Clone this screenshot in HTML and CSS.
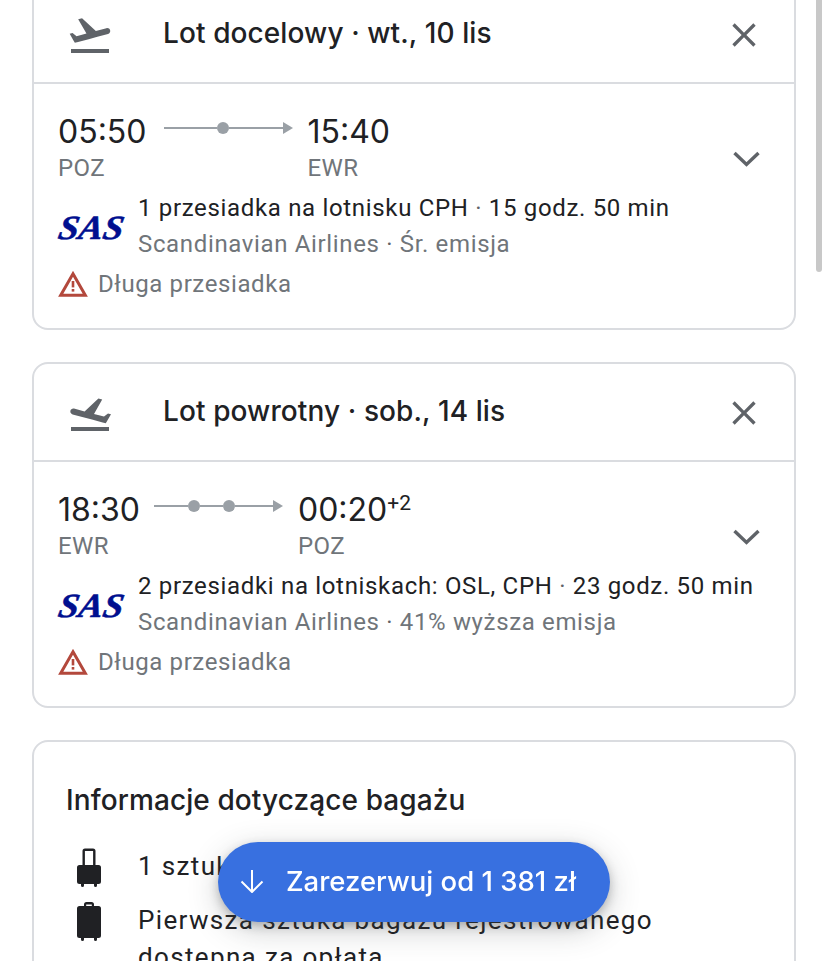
FILE: index.html
```html
<!DOCTYPE html>
<html lang="pl">
<head>
<meta charset="utf-8">
<title>Lot</title>
<link rel="stylesheet" href="styles.css">
</head>
<body>
<main class="page">
  <section class="card">
    <header class="card-head">
      <svg class="head-icon" viewBox="0 0 24 24"><path d="M2.5 19h19v2h-19zm19.57-9.36c-.21-.8-1.04-1.28-1.84-1.06L14.92 10l-6.9-6.43-1.93.51 4.14 7.17-4.97 1.33-1.97-1.54-1.45.39 1.82 3.16.77 1.33 1.6-.43 5.31-1.42 4.35-1.16L21 11.49c.81-.23 1.28-1.05 1.07-1.85z"/></svg>
      <h2 class="head-title">Lot docelowy · wt., 10 lis</h2>
      <svg class="close-icon" viewBox="0 0 24 24"><path d="M19 6.41 17.59 5 12 10.59 6.41 5 5 6.41 10.59 12 5 17.59 6.41 19 12 13.41 17.59 19 19 17.59 13.41 12z"/></svg>
    </header>
    <div class="card-body">
      <div class="times">
        <div class="time-col">
          <div class="time">05:50</div>
          <div class="code">POZ</div>
        </div>
        <div class="route">
          <span class="line lead-one"></span><span class="dot"></span><span class="line tail"></span><span class="arrow"></span>
        </div>
        <div class="time-col">
          <div class="time">15:40</div>
          <div class="code">EWR</div>
        </div>
      </div>
      <svg class="chev" viewBox="0 0 30 20"><path d="M2.500 4 14.500 15.500 26.500 4" fill="none" stroke-width="3.400"/></svg>
      <div class="info">
        <div class="logo">SAS</div>
        <div class="info-text">
          <div class="stops">1 przesiadka na lotnisku CPH <span class="sep">·</span> 15 godz. 50 min</div>
          <div class="sub">Scandinavian Airlines <span class="sep">·</span> Śr. emisja</div>
        </div>
      </div>
      <div class="warn">
        <svg class="warn-icon" viewBox="0 0 30 26"><path d="M15 2.800 27.300 24.200H2.700Z" fill="none" stroke="#b3483c" stroke-width="3"/><rect x="13.700" y="10" width="2.600" height="6.400" fill="#b3483c"/><rect x="13.700" y="18" width="2.600" height="2.600" fill="#b3483c"/></svg>
        <span>Długa przesiadka</span>
      </div>
    </div>
  </section>

  <section class="card">
    <header class="card-head">
      <svg class="head-icon" viewBox="0 0 24 24"><path d="M2.500 19h19v2h-19zM2.200 10.900c-.2.8.3 1.600 1.100 1.800l5.300 1.400 4.400 1.200 5.300 1.400 1.600.4.8-1.300 1.800-3.200-1.500-.4-2 1.600-5-1.300 4.100-7.200-1.900-.5-6.900 6.400-5.300-1.400c-.8-.2-1.600.3-1.800 1.100z"/></svg>
      <h2 class="head-title">Lot powrotny · sob., 14 lis</h2>
      <svg class="close-icon" viewBox="0 0 24 24"><path d="M19 6.41 17.59 5 12 10.59 6.41 5 5 6.41 10.59 12 5 17.59 6.41 19 12 13.41 17.59 19 19 17.59 13.41 12z"/></svg>
    </header>
    <div class="card-body">
      <div class="times">
        <div class="time-col">
          <div class="time">18:30</div>
          <div class="code">EWR</div>
        </div>
        <div class="route route-two">
          <span class="line lead-two"></span><span class="dot"></span><span class="line short"></span><span class="dot"></span><span class="line tail"></span><span class="arrow"></span>
        </div>
        <div class="time-col">
          <div class="time">00:20<sup class="plus">+2</sup></div>
          <div class="code">POZ</div>
        </div>
      </div>
      <svg class="chev" viewBox="0 0 30 20"><path d="M2.500 4 14.500 15.500 26.500 4" fill="none" stroke-width="3.400"/></svg>
      <div class="info">
        <div class="logo">SAS</div>
        <div class="info-text">
          <div class="stops">2 przesiadki na lotniskach: OSL, CPH <span class="sep">·</span> 23 godz. 50 min</div>
          <div class="sub">Scandinavian Airlines <span class="sep">·</span> 41% wyższa emisja</div>
        </div>
      </div>
      <div class="warn">
        <svg class="warn-icon" viewBox="0 0 30 26"><path d="M15 2.800 27.300 24.200H2.700Z" fill="none" stroke="#b3483c" stroke-width="3"/><rect x="13.700" y="10" width="2.600" height="6.400" fill="#b3483c"/><rect x="13.700" y="18" width="2.600" height="2.600" fill="#b3483c"/></svg>
        <span>Długa przesiadka</span>
      </div>
    </div>
  </section>

  <section class="card bag-card">
    <h2 class="bag-title">Informacje dotyczące bagażu</h2>
    <div class="bag-row">
      <svg class="bag-icon" viewBox="0 0 24 39"><path d="M5.500 17V3A2.500 2.500 0 0 1 8 .5h8A2.500 2.500 0 0 1 18.500 3v14h-2.400V3H7.900v14z"/><path d="M2.500 17h19A2.500 2.500 0 0 1 24 19.500v14a2.500 2.500 0 0 1-2.500 2.500H20v1.500a1.500 1.500 0 0 1-3 0V36H7v1.500a1.500 1.500 0 0 1-3 0V36H2.500A2.500 2.500 0 0 1 0 33.500v-14A2.500 2.500 0 0 1 2.500 17z"/></svg>
      <div class="bag-text">1 sztuka bagażu podręcznego</div>
    </div>
    <div class="bag-row">
      <svg class="bag-icon" viewBox="0 0 24 39"><path d="M7 5V2.500A2.500 2.500 0 0 1 9.500 0h5A2.500 2.500 0 0 1 17 2.500V5h-2.200V2.500H9.200V5z"/><path d="M2.500 4h19A2.500 2.500 0 0 1 24 6.500v27a2.500 2.500 0 0 1-2.500 2.500H20v1.500a1.500 1.500 0 0 1-3 0V36H7v1.500a1.500 1.500 0 0 1-3 0V36H2.500A2.500 2.500 0 0 1 0 33.500v-27A2.500 2.500 0 0 1 2.500 4z"/></svg>
      <div class="bag-text">Pierwsza sztuka bagażu rejestrowanego dostępna za opłatą</div>
    </div>
  </section>
</main>

<button class="fab" type="button">
  <svg class="fab-icon" viewBox="0 0 24 24"><path d="M12 1V23M1.500 12.500 12 23l10.500-10.500" fill="none" stroke="#fff" stroke-width="2"/></svg>
  <span>Zarezerwuj od 1 381 zł</span>
</button>
<div class="scroll-thumb"></div>
</body>
</html>
```
FILE: styles.css
```css
* { box-sizing: border-box; }
html, body { margin: 0; height: 961px; overflow: hidden; background: #fff; }
body { font-family: Roboto, "Liberation Sans", sans-serif; color: #202124; }

.page {
  width: 764px;
  margin: -16px 0 0 32px;
  display: flex;
  flex-direction: column;
  gap: 32px;
}
.card {
  border: 2px solid #dadce0;
  border-radius: 16px;
  background: #fff;
}
.card-head {
  height: 98px;
  border-bottom: 2px solid #dadce0;
  display: flex;
  align-items: center;
  padding: 2px 30px 0 32px;
}
.head-icon { width: 48px; height: 48px; fill: #5f6368; flex: none; }
.head-title {
  margin: 0 0 4px 49px;
  font: 500 28px/36px Inter, Roboto, sans-serif;
  letter-spacing: .1px;
  flex: 1;
}
.close-icon { width: 40px; height: 40px; fill: #5f6368; flex: none; }

.card-body { position: relative; padding: 26px 24px 26px 24px; }
.times { display: flex; align-items: flex-start; }
.time { padding-top: 1px; font: 400 32px/41px Inter, Roboto, sans-serif; white-space: nowrap; }
.plus { font: 400 21px/0 Roboto, sans-serif; vertical-align: 11px; }
.code { font: 400 24px/32px Roboto, sans-serif; color: #70757a; letter-spacing: .4px; }
.route { display: flex; align-items: center; width: 129px; height: 40px; margin: 0 15px 0 17px; padding-bottom: 4px; flex: none; }
.route-two { margin-left: 14px; }
.line { height: 2px; background: #9aa0a6; }
.lead-one { flex: 1; }
.lead-two { flex: none; width: 34px; }
.line.tail { flex: 1; }
.line.short { flex: none; width: 23px; }
.dot { width: 12px; height: 12px; border-radius: 50%; background: #9aa0a6; flex: none; }
.arrow {
  width: 0; height: 0; flex: none;
  border-left: 10px solid #9aa0a6;
  border-top: 6px solid transparent;
  border-bottom: 6px solid transparent;
}
.chev { position: absolute; top: 65px; right: 32px; width: 30px; height: 20px; stroke: #5f6368; }

.info { display: flex; align-items: center; margin-top: 6px; }
.logo {
  width: 80px;
  flex: none;
  font: italic 700 34px/36px "Liberation Serif", serif;
  color: #000f8f;
  -webkit-text-stroke: .5px #000f8f;
  transform-origin: left center;
  transform: translate(1px, 2px) scaleX(1.07) skewX(-10deg);
}
.stops { font-size: 24px; line-height: 36px; letter-spacing: .67px; white-space: nowrap; }
.sub { font-size: 24px; line-height: 36px; letter-spacing: .65px; color: #70757a; white-space: nowrap; }
.sep { color: #5f6368; }
.warn { display: flex; align-items: center; gap: 10px; margin-top: 4px; font-size: 24px; line-height: 36px; letter-spacing: .6px; color: #70757a; }
.warn-icon { width: 30px; height: 26px; flex: none; }

.bag-card { padding: 36px 32px 0 32px; height: 400px; }
.bag-title { margin: 0 0 26px; font: 500 28px/44px Inter, Roboto, sans-serif; letter-spacing: .1px; }
.bag-row { display: flex; align-items: flex-start; margin-bottom: 15px; }
.bag-icon { width: 24px; height: 39px; margin: 0 37px 0 11px; fill: #202124; flex: none; }
.bag-text { font-size: 26px; line-height: 37px; letter-spacing: 1.35px; width: 540px; }

.fab {
  position: fixed;
  left: 218px;
  top: 842px;
  width: 392px;
  height: 80px;
  border: 0;
  border-radius: 40px;
  background: #3870e0;
  color: #fff;
  display: flex;
  align-items: center;
  gap: 22px;
  padding: 0 0 2px 22px;
  font: 500 27.5px/36px Inter, Roboto, sans-serif;
  box-shadow: 0 4px 10px rgba(60,64,67,.3), 0 8px 30px rgba(60,64,67,.25);
}
.fab-icon { width: 24px; height: 24px; flex: none; }
.scroll-thumb {
  position: fixed;
  left: 816px;
  top: -6px;
  width: 6px;
  height: 278px;
  border-radius: 3px;
  background: #c8c8c8;
}
```
